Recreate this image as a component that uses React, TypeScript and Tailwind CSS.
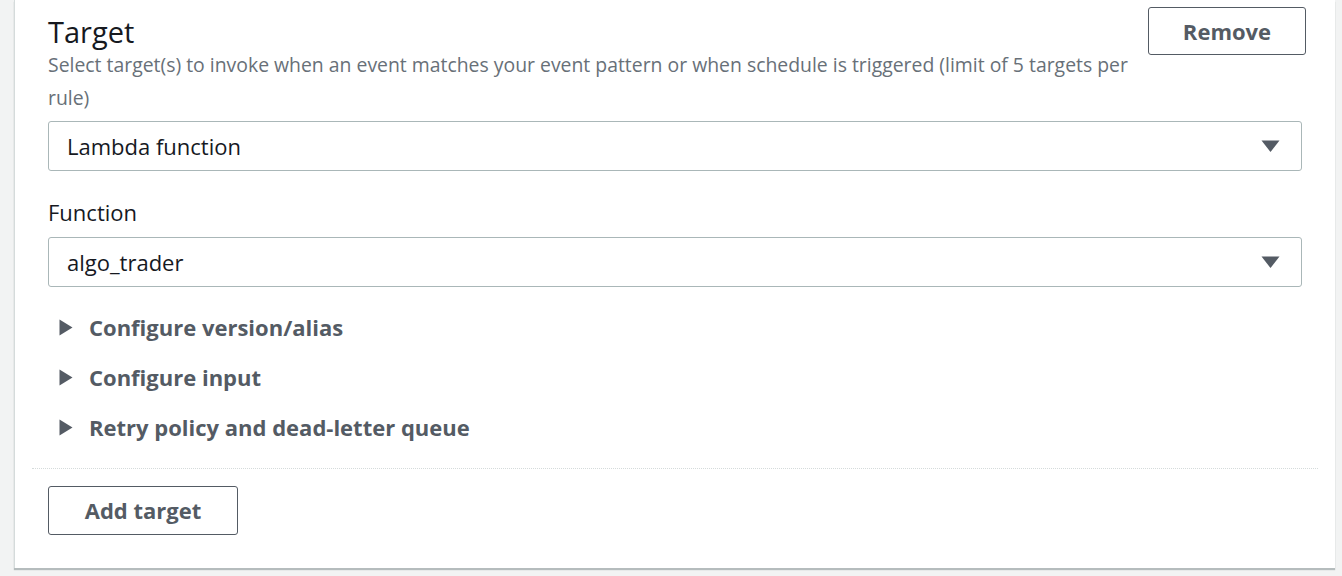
import { useState } from "react";

const font = { fontFamily: '"Open Sans", "Noto Sans", Arial, sans-serif' };

function Caret() {
  return (
    <svg width="19" height="14" viewBox="0 0 19 14" className="shrink-0">
      <path d="M0.5 1.5h18L9.5 13z" fill="#545b64" />
    </svg>
  );
}

function SelectBox({ value }: { value: string }) {
  return (
    <div className="flex h-[50px] items-center justify-between rounded-[3px] border border-[#aab7b8] bg-white pl-[18px] pr-[21px]">
      <span className="text-[22px] text-[#16191f]">{value}</span>
      <Caret />
    </div>
  );
}

function Expander({ label }: { label: string }) {
  const [open, setOpen] = useState(false);
  return (
    <button
      onClick={() => setOpen(!open)}
      className="flex h-[50px] items-center gap-[16px] pl-[11px] text-left"
    >
      <svg width="14" height="17" viewBox="0 0 14 17" className={open ? "rotate-90" : ""}>
        <path d="M0.5 0.5l13 8-13 8z" fill="#545b64" />
      </svg>
      <span className="text-[22px] font-bold text-[#545b64]">{label}</span>
    </button>
  );
}

export default function App() {
  return (
    <div className="min-h-[576px] bg-[#f2f3f3] pl-[14px] pr-[7px]" style={font}>
      <div className="border-l border-[#d5dbdb] bg-white shadow-[0_2px_1px_rgba(0,22,28,0.25)]">
        <div className="px-[33px] pt-[7px]">
          <div className="flex items-start gap-[20px]">
            <div className="flex-1 pt-[9px]">
              <h2 className="text-[29px] leading-[32px] text-[#16191f]">Target</h2>
              <p className="text-[19.4px] leading-[33px] text-[#687078]">
                Select target(s) to invoke when an event matches your event pattern or when schedule is triggered (limit of 5 targets per rule)
              </p>
            </div>
            <button className="-mr-[4px] h-[48px] w-[158px] rounded-[3px] border border-[#545b64] bg-white text-[22px] font-bold text-[#545b64]">
              Remove
            </button>
          </div>

          <div className="mt-[7px]">
            <SelectBox value="Lambda function" />
          </div>

          <div className="mt-[27px] text-[22px] leading-[28px] text-[#16191f]">Function</div>
          <div className="mt-[11px]">
            <SelectBox value="algo_trader" />
          </div>

          <div className="mt-[15px] flex flex-col">
            <Expander label="Configure version/alias" />
            <Expander label="Configure input" />
            <Expander label="Retry policy and dead-letter queue" />
          </div>
        </div>

        <div className="mx-[17px] mt-[16px] border-t border-dotted border-[#d5dbdb]" />

        <div className="px-[33px] pb-[33px] pt-[17px]">
          <button className="h-[49px] w-[190px] rounded-[3px] border border-[#545b64] bg-white text-[22px] font-bold text-[#545b64]">
            Add target
          </button>
        </div>
      </div>
    </div>
  );
}
